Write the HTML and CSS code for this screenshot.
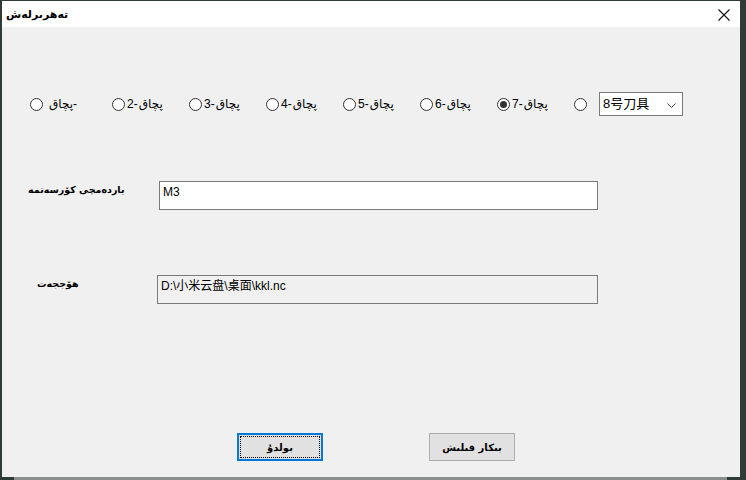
FILE: index.html
```html
<!DOCTYPE html>
<html>
<head>
<meta charset="utf-8">
<link rel="stylesheet" href="styles.css">
</head>
<body>
<div class="frame">
  <div class="window">
    <div class="titlebar">
      <span class="title" dir="rtl">تەھرىرلەش</span>
      <svg class="close" width="12" height="12" viewBox="0 0 12 12"><path d="M0.5 0.5L11.5 11.5M11.5 0.5L0.5 11.5" stroke="#111" stroke-width="1.1" fill="none"/></svg>
    </div>
    <div class="client">
      <div class="radios">
        <div class="radio first"><span class="circle"></span><span class="rtext"><span class="ar" dir="rtl">پچاق</span><span>-</span></span></div>
        <div class="radio"><span class="circle"></span><span class="rtext"><span>2-</span><span class="ar" dir="rtl">پچاق</span></span></div>
        <div class="radio"><span class="circle"></span><span class="rtext"><span>3-</span><span class="ar" dir="rtl">پچاق</span></span></div>
        <div class="radio"><span class="circle"></span><span class="rtext"><span>4-</span><span class="ar" dir="rtl">پچاق</span></span></div>
        <div class="radio"><span class="circle"></span><span class="rtext"><span>5-</span><span class="ar" dir="rtl">پچاق</span></span></div>
        <div class="radio"><span class="circle"></span><span class="rtext"><span>6-</span><span class="ar" dir="rtl">پچاق</span></span></div>
        <div class="radio"><span class="circle checked"></span><span class="rtext"><span>7-</span><span class="ar" dir="rtl">پچاق</span></span></div>
        <div class="radio last"><span class="circle"></span></div>
        <div class="combo"><span class="ctext">8号刀具</span><svg class="chev" width="9" height="5" viewBox="0 0 9 5"><path d="M0.5 0.5L4.5 4.5L8.5 0.5" stroke="#444" stroke-width="1" fill="none"/></svg></div>
      </div>
      <div class="field f1">
        <div class="flabel"><span dir="rtl">ياردەمچى كۆرسەتمە</span></div>
        <div class="input">M3</div>
      </div>
      <div class="field f2">
        <div class="flabel"><span dir="rtl">ھۆججەت</span></div>
        <div class="input readonly">D:\小米云盘\桌面\kkl.nc</div>
      </div>
      <div class="buttons">
        <div class="btn default"><span class="focus"><span dir="rtl">بولدۇ</span></span></div>
        <div class="btn"><span dir="rtl">بىكار قىلىش</span></div>
      </div>
    </div>
  </div>
  <div class="bottomstrip"></div>
</div>
</body>
</html>
```
FILE: styles.css
```css
html, body {
  margin: 0;
  padding: 0;
}
body {
  width: 746px;
  height: 480px;
  overflow: hidden;
  font-family: "Liberation Sans", "DejaVu Sans", "Noto Sans CJK SC", sans-serif;
  font-size: 12px;
  color: #000;
  background: #2e3b37;
}
.frame {
  width: 746px;
  height: 480px;
  display: flex;
  flex-direction: column;
}
.window {
  width: 738px;
  height: 476px;
  margin: 1px 0 0 2px;
  background: #f0f0f0;
  display: flex;
  flex-direction: column;
}
.bottomstrip {
  height: 3px;
  margin: 0 19px 0 14px;
  background: #8a8f8d;
}
.titlebar {
  height: 26px;
  background: #fff;
  display: flex;
  align-items: center;
  justify-content: space-between;
  padding: 0 10px 0 4px;
  flex: none;
}
.title {
  font-family: "DejaVu Sans", sans-serif;
  font-weight: bold;
  font-size: 11px;
}
.close {
  display: block;
  margin-top: 1px;
}
.client {
  flex: 1;
  display: flex;
  flex-direction: column;
}
.radios {
  display: flex;
  align-items: center;
  margin-top: 65px;
  padding-left: 28px;
  height: 24px;
}
.radio {
  width: 77px;
  display: flex;
  align-items: center;
  flex: none;
}
.radio.first {
  width: 82px;
}
.radio.first .rtext {
  margin-left: 5px;
}
.radio.last {
  width: 25px;
}
.circle {
  width: 11px;
  height: 11px;
  border: 1px solid #333;
  border-radius: 50%;
  background: #fff;
  position: relative;
  flex: none;
}
.circle.checked::after {
  content: "";
  position: absolute;
  left: 2px;
  top: 2px;
  width: 7px;
  height: 7px;
  border-radius: 50%;
  background: #333;
}
.rtext {
  margin-left: 2px;
  font-family: "Liberation Sans", "DejaVu Sans", sans-serif;
  font-size: 12px;
  display: flex;
  align-items: baseline;
}
.ar {
  font-family: "DejaVu Sans", sans-serif;
  font-size: 12px;
  margin-left: 1px;
}
.combo {
  width: 73px;
  height: 22px;
  border: 1px solid #7a7a7a;
  background: #fff;
  display: flex;
  align-items: center;
  justify-content: space-between;
  padding: 0 6px 0 3px;
  box-sizing: content-box;
  flex: none;
}
.ctext {
  font-size: 13px;
  margin-top: -4px;
}
.chev {
  display: block;
  margin-top: 2px;
}
.field {
  display: flex;
  align-items: flex-start;
  margin-top: 65px;
}
.f1 {
  padding-left: 26px;
}
.f2 {
  padding-left: 35px;
}
.flabel {
  font-family: "DejaVu Sans", sans-serif;
  font-weight: bold;
  font-size: 9.5px;
  text-align: left;
  margin-top: 3px;
  flex: none;
}
.f1 .flabel {
  width: 131px;
}
.f2 .flabel {
  width: 120px;
}
.input {
  border: 1px solid #7a7a7a;
  background: #fff;
  padding: 2px 3px;
  box-sizing: border-box;
  line-height: 16px;
  font-size: 12px;
}
.f1 .input {
  width: 439px;
  height: 29px;
}
.f2 .input {
  width: 441px;
  height: 29px;
}
.input.readonly {
  background: #f0f0f0;
}
.buttons {
  display: flex;
  margin-top: 129px;
  padding-left: 235px;
  gap: 106px;
}
.btn {
  width: 86px;
  height: 28px;
  box-sizing: border-box;
  border: 1px solid #adadad;
  background: #e1e1e1;
  display: flex;
  align-items: center;
  justify-content: center;
  font-family: "DejaVu Sans", sans-serif;
  font-weight: bold;
  font-size: 10px;
}
.btn.default {
  border: 2px solid #0078d7;
  padding: 1px;
}
.focus {
  flex: 1;
  align-self: stretch;
  border: 1px dotted #000;
  display: flex;
  align-items: center;
  justify-content: center;
}
```
